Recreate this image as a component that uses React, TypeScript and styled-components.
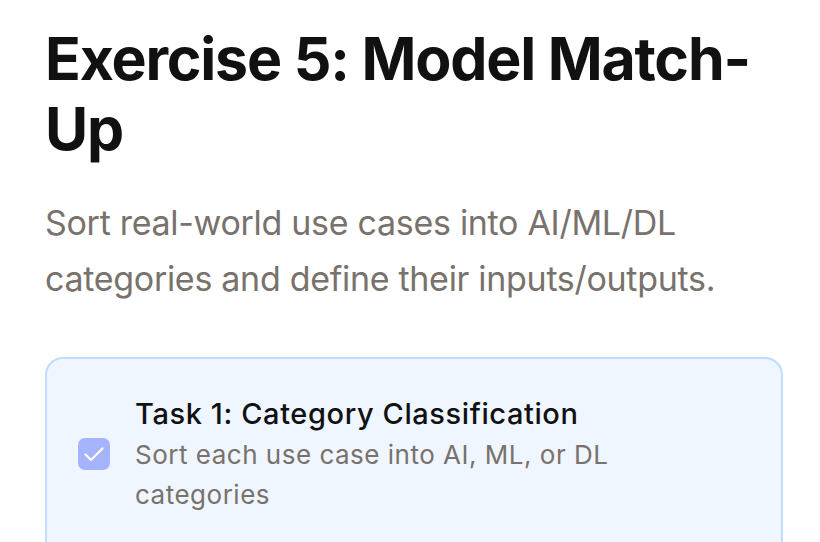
import React from "react";
import styled, { createGlobalStyle } from "styled-components";

const Global = createGlobalStyle`
  html, body { margin: 0; padding: 0; background: #ffffff; }
  body { font-family: Inter, "Noto Sans", sans-serif; -webkit-font-smoothing: antialiased; }
  * { box-sizing: border-box; }
`;

const Page = styled.div`
  padding: 24px 37px 0 45px;
  display: flex;
  flex-direction: column;
`;

const Title = styled.h1`
  margin: 0;
  font-size: 59px;
  line-height: 70px;
  font-weight: 700;
  letter-spacing: -1.2px;
  color: #111111;
`;

const Subtitle = styled.p`
  margin: 31px 0 0;
  font-size: 34px;
  line-height: 56px;
  font-weight: 400;
  letter-spacing: -0.3px;
  color: #78716c;
  max-width: 720px;
`;

const Card = styled.div`
  margin-top: 50px;
  border: 2px solid #bfdbfe;
  background: #eff6ff;
  border-radius: 18px;
  padding: 34px 31px 40px 31px;
  min-height: 240px;
`;

const CardRow = styled.div`
  display: flex;
  align-items: center;
  gap: 25px;
`;

const Check = styled.div`
  width: 32px;
  height: 32px;
  border-radius: 7px;
  background: #a5b4fc;
  display: flex;
  align-items: center;
  justify-content: center;
  flex-shrink: 0;
`;

const TextCol = styled.div`
  display: flex;
  flex-direction: column;
  max-width: 570px;
`;

const TaskTitle = styled.div`
  font-size: 29px;
  line-height: 42px;
  font-weight: 500;
  letter-spacing: 0.6px;
  color: #111111;
`;

const TaskDesc = styled.div`
  font-size: 26px;
  line-height: 40px;
  letter-spacing: 0.5px;
  color: #78716c;
`;

export default function App() {
  return (
    <>
      <Global />
      <Page>
        <Title>Exercise 5: Model Match-Up</Title>
        <Subtitle>
          Sort real-world use cases into AI/ML/DL categories and define their inputs/outputs.
        </Subtitle>
        <Card>
          <CardRow>
            <Check>
              <svg width="32" height="32" viewBox="0 0 32 32" fill="none" stroke="#ffffff" strokeWidth="2.2" strokeLinecap="round" strokeLinejoin="round">
                <polyline points="7.5,16.5 13,22 24.5,10.5" />
              </svg>
            </Check>
            <TextCol>
              <TaskTitle>Task 1: Category Classification</TaskTitle>
              <TaskDesc>Sort each use case into AI, ML, or DL categories</TaskDesc>
            </TextCol>
          </CardRow>
        </Card>
      </Page>
    </>
  );
}
